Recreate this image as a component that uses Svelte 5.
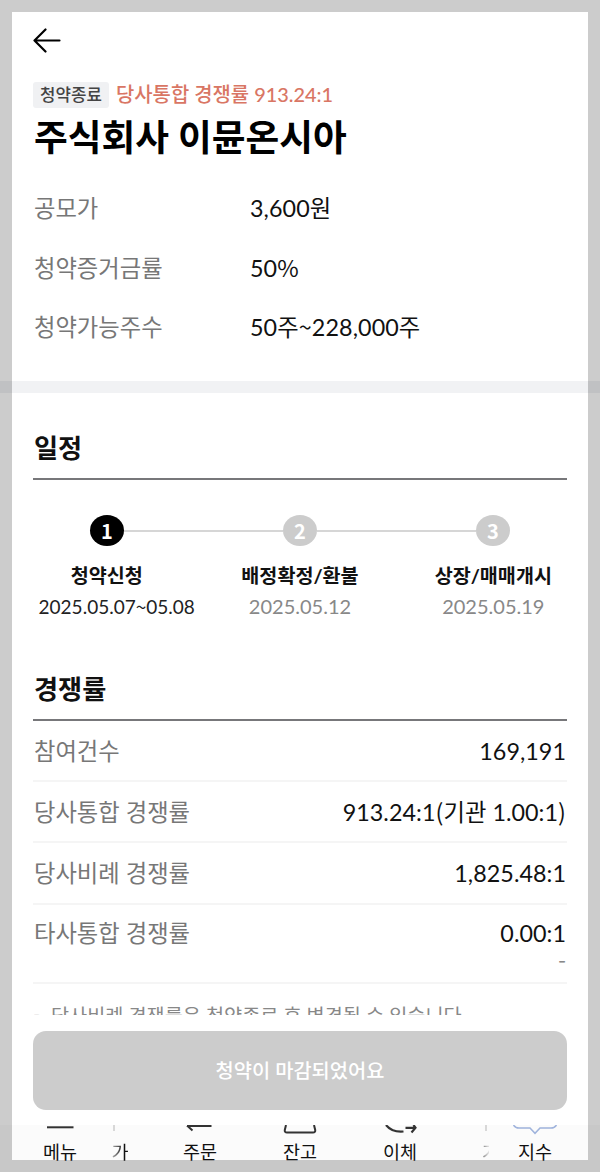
<script lang="ts">
	const summary = [
		{ label: '공모가', value: '3,600원' },
		{ label: '청약증거금률', value: '50%' },
		{ label: '청약가능주수', value: '50주~228,000주' }
	];

	const steps = [
		{ label: '청약신청', date: '2025.05.07~05.08', active: true },
		{ label: '배정확정/환불', date: '2025.05.12', active: false },
		{ label: '상장/매매개시', date: '2025.05.19', active: false }
	];

	const rates = [
		{ label: '참여건수', value: '169,191' },
		{ label: '당사통합 경쟁률', value: '913.24:1(기관 1.00:1)' },
		{ label: '당사비례 경쟁률', value: '1,825.48:1' },
		{ label: '타사통합 경쟁률', value: '0.00:1', sub: '-' }
	];

	// symbols are set in the Korean face, digits in Lato
	const split = (text: string) => text.split(/([%~()])/).filter(Boolean);
	const isSymbol = (part: string) => /^[%~()]$/.test(part);
</script>

{#snippet mixed(text: string)}
	<span class="mixed">{#each split(text) as part}{#if isSymbol(part)}<span class="symbol">{part}</span>{:else}{part}{/if}{/each}</span>
{/snippet}

<div class="screen">
	<main class="content">
		<header class="topbar">
			<button class="back" aria-label="뒤로">
				<svg width="28" height="26" viewBox="0 0 28 26" fill="none" stroke="#000" stroke-width="2.2" stroke-linecap="round" stroke-linejoin="round">
					<path d="M12.5 1.5 1.5 12.5 12.5 23.5M1.5 12.5H26.5" />
				</svg>
			</button>
		</header>

		<section class="intro">
			<div class="status">
				<span class="badge">청약종료</span>
				<span class="rate">당사통합 경쟁률 913.24:1</span>
			</div>
			<h1>주식회사 이뮨온시아</h1>
			<dl class="summary">
				{#each summary as item (item.label)}
					<dt>{item.label}</dt>
					<dd>{@render mixed(item.value)}</dd>
				{/each}
			</dl>
		</section>

		<div class="divider"></div>

		<section class="schedule">
			<h2>일정</h2>
			<div class="track">
				{#each steps as step, i (step.label)}
					{#if i > 0}
						<span class="line"></span>
					{/if}
					<span class="dot {step.active ? 'active' : ''}">{i + 1}</span>
				{/each}
			</div>
			<div class="steps">
				{#each steps as step (step.label)}
					<div class="step {step.active ? 'active' : ''}">
						<strong>{step.label}</strong>
						<span class="date">{@render mixed(step.date)}</span>
					</div>
				{/each}
			</div>
		</section>

		<section class="competition">
			<h2>경쟁률</h2>
			{#each rates as row (row.label)}
				<div class="row {row.sub ? 'tall' : ''}">
					<span class="row-label">{row.label}</span>
					<span class="row-value">
						{@render mixed(row.value)}
						{#if row.sub}
							<small>{row.sub}</small>
						{/if}
					</span>
				</div>
			{/each}
			<p class="note"><span>-</span>당사비례 경쟁률은 청약종료 후 변경될 수 있습니다.</p>
		</section>
	</main>

	<div class="action">
		<button class="submit" disabled>청약이 마감되었어요</button>
	</div>

	<nav class="tabs">
		<div class="tab">
			<svg width="40" height="10" viewBox="0 0 40 10" fill="none" stroke="#333" stroke-width="2">
				<path d="M7 2.3H33.5" />
			</svg>
			<span>메뉴</span>
		</div>
		<div class="tab cut-left">
			<svg width="40" height="10" viewBox="0 0 40 10" fill="none" stroke="#ccc" stroke-width="1.5">
				<path d="M14 0V6" />
			</svg>
			<span>가</span>
		</div>
		<div class="tab">
			<svg width="40" height="10" viewBox="0 0 40 10" fill="none" stroke="#333" stroke-width="2">
				<path d="M7 .5 12.5 5.5M7 1H31.5" />
			</svg>
			<span>주문</span>
		</div>
		<div class="tab">
			<svg width="40" height="10" viewBox="0 0 40 10" fill="none" stroke="#333" stroke-width="2">
				<path d="M6 0 4.8 5Q4.5 7.5 7 7.5H33Q35.5 7.5 35.2 5L34 0" />
			</svg>
			<span>잔고</span>
		</div>
		<div class="tab">
			<svg width="40" height="10" viewBox="0 0 40 10" fill="none" stroke="#333" stroke-width="2.2">
				<path d="M6 0Q12 7.5 23.5 6.5M25.5 2.8H35.5M31.5 7.5 35.5 2.8 33.5 0" />
			</svg>
			<span>이체</span>
		</div>
		<div class="tab cut-right">
			<svg width="40" height="10" viewBox="0 0 40 10" fill="none" stroke="#ccc" stroke-width="1.5">
				<path d="M20 0V6" />
			</svg>
			<span>가</span>
		</div>
		<div class="tab">
			<svg width="46" height="10" viewBox="0 0 46 10" fill="none" stroke="#9fb3dc" stroke-width="1.5">
				<path d="M1.5 0Q3.5 3 7 3H18L23 8.3 28 3H39Q42.5 3 44.5 0" />
			</svg>
			<span>지수</span>
		</div>
	</nav>
</div>

<style>
	:global(body) {
		margin: 0;
		background: #fff;
	}

	.screen {
		position: relative;
		display: flex;
		flex-direction: column;
		width: 600px;
		height: 1172px;
		overflow: hidden;
		background: #fff;
		color: #111;
		font-family: Lato, 'Noto Sans CJK KR', sans-serif;
		font-size: 23.3px;
	}

	/* translucent frame over everything */
	.screen::after {
		content: '';
		position: absolute;
		inset: 0;
		border: 12px solid rgba(0, 0, 0, 0.2);
		pointer-events: none;
	}

	button {
		border: none;
		padding: 0;
		font-family: inherit;
	}

	h1,
	h2,
	dl,
	dd,
	p {
		margin: 0;
	}

	.mixed {
		white-space: nowrap;
	}

	.symbol {
		font-family: 'Noto Sans CJK KR', sans-serif;
		line-height: 1;
	}

	.content {
		height: 1015px;
		flex: none;
		overflow: hidden;
	}

	.topbar {
		display: flex;
		align-items: center;
		height: 81px;
		padding: 0 33px;
	}

	.back {
		display: flex;
		background: none;
	}

	.intro {
		height: 300px;
		padding: 1px 34px 0;
		box-sizing: border-box;
	}

	.status {
		display: flex;
		align-items: center;
		gap: 7px;
		height: 26px;
		margin-left: -1px;
	}

	.badge {
		width: 76px;
		height: 26px;
		line-height: 26px;
		border-radius: 3px;
		background: #f0f1f3;
		color: #444;
		font-size: 16.8px;
		font-weight: 500;
		text-align: center;
	}

	.rate {
		margin-top: -2px;
		color: #d97664;
		font-size: 19.9px;
		line-height: 24px;
		font-weight: 500;
	}

	h1 {
		height: 71px;
		line-height: 58px;
		color: #000;
		font-size: 36.7px;
		font-weight: 700;
		white-space: nowrap;
	}

	.summary {
		display: grid;
		grid-template-columns: 216px 1fr;
		grid-auto-rows: 59.7px;
		line-height: 59.7px;
	}

	.summary .mixed {
		letter-spacing: 0.1px;
	}

	dt {
		color: #777;
	}

	.divider {
		height: 12px;
		background: #f1f2f4;
	}

	.schedule {
		height: 248px;
	}

	h2 {
		height: 87px;
		margin: 0 33px;
		padding: 22px 1px 0;
		box-sizing: border-box;
		border-bottom: 2px solid #77777a;
		line-height: 67px;
		color: #111;
		font-size: 26.2px;
		font-weight: 700;
	}

	.track {
		display: flex;
		align-items: center;
		padding: 35px 90px 0;
	}

	.dot {
		width: 34px;
		height: 31px;
		border-radius: 50%;
		background: #ccc;
		color: #fff;
		font-family: 'Noto Sans CJK KR', sans-serif;
		font-size: 20px;
		font-weight: 700;
		line-height: 31px;
		text-align: center;
	}

	.dot.active {
		background: #000;
	}

	.line {
		flex: 1;
		height: 2px;
		background: #d6d6d6;
	}

	.steps {
		display: grid;
		grid-template-columns: repeat(3, 193.3px);
		justify-content: center;
		padding-top: 14px;
	}

	.step {
		display: flex;
		flex-direction: column;
		align-items: center;
		color: #888;
		font-size: 20px;
		line-height: 31px;
	}

	.step strong {
		color: #111;
		font-size: 19.6px;
		font-weight: 700;
	}

	.step.active {
		color: #222;
	}

	.step.active .date {
		padding-left: 20px;
		font-size: 19px;
	}

	.competition h2 {
		height: 80px;
		padding-top: 15px;
	}

	.row {
		display: flex;
		justify-content: space-between;
		height: 61.2px;
		margin: 0 33px;
		padding: 0 1px;
		box-sizing: border-box;
		border-bottom: 2px solid #f5f5f5;
		line-height: 61px;
	}

	.row-label {
		color: #777;
	}

	.row.tall {
		height: 79.4px;
		line-height: 56px;
	}

	.row-value {
		display: flex;
		flex-direction: column;
		align-items: flex-end;
	}

	.row-value .mixed {
		letter-spacing: 0.05px;
	}

	.row-value small {
		margin-top: -16px;
		color: #888;
		font-family: 'Noto Sans CJK KR', sans-serif;
		font-size: 22px;
		line-height: 26px;
	}

	.note {
		display: flex;
		padding: 17px 33px 0;
		color: #888;
		font-size: 19.7px;
		line-height: 30px;
		white-space: nowrap;
	}

	.note span {
		width: 18px;
		line-height: 25px;
	}

	.action {
		height: 110px;
		flex: none;
		padding: 16px 33px 0;
		box-sizing: border-box;
	}

	.submit {
		width: 534px;
		height: 79px;
		padding-bottom: 2px;
		border-radius: 13px;
		background: #ccc;
		color: #fff;
		font-size: 19.8px;
		font-weight: 500;
	}

	.tabs {
		display: grid;
		grid-template-columns: 80px 40px 120px 80px 120px 51px 48px;
		flex: 1;
		padding-left: 20px;
		background: #fbfbfb;
	}

	.tab {
		display: flex;
		flex-direction: column;
		align-items: center;
		color: #111;
		font-size: 18.5px;
		line-height: 35px;
		white-space: nowrap;
	}

	.tab svg {
		flex: none;
	}

	.cut-left span {
		background: linear-gradient(90deg, #bbb, #111 70%);
		background-clip: text;
		color: transparent;
	}

	.cut-right span {
		width: 7px;
		overflow: hidden;
		background: linear-gradient(90deg, #777, #ddd 90%);
		background-clip: text;
		color: transparent;
	}
</style>
